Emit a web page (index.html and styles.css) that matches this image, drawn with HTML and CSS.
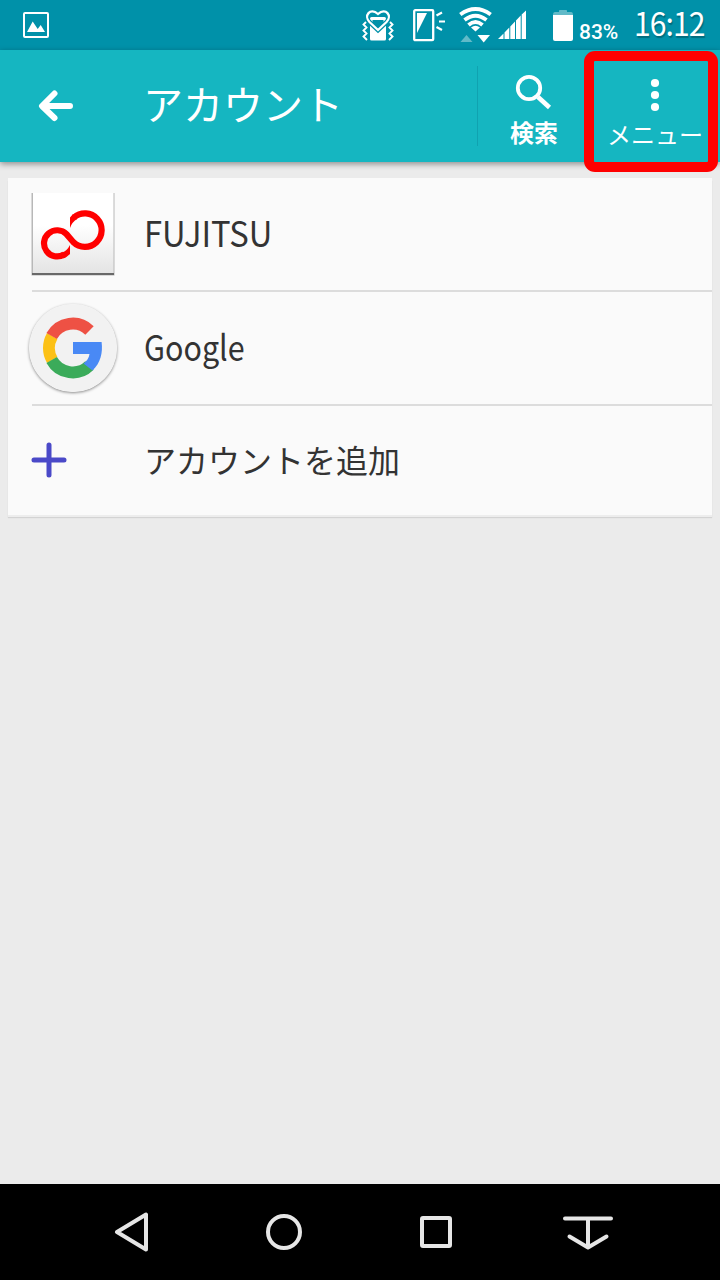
FILE: index.html
```
<!DOCTYPE html>
<html lang="ja">
<head>
    <meta charset="UTF-8">
    <meta name="viewport" content="width=device-width, initial-scale=1.0">
    <title>アカウント</title>
    <link rel="stylesheet" href="styles.css">
</head>
<body>
    <div class="screen">
        <div class="status-bar">
            <svg class="status-picture" width="28" height="28" viewBox="0 0 28 28">
                <rect x="2" y="2" width="24" height="24" rx="1" fill="none" stroke="#fff" stroke-width="2"/>
                <path d="M5 21L10.700 10.500 15.700 18 18.700 14 23 21Z" fill="#fff"/>
            </svg>
            <div class="status-icons">
                <svg class="icon-manner" width="32" height="34" viewBox="0 0 32 34" fill="none" stroke="#fff">
                    <rect x="8" y="9" width="16" height="23.500" rx="1.500" fill="#fff" stroke="none"/>
                    <path d="M10.500 12H21.500V19L16 23 10.500 19Z" fill="#0091a9" stroke="none"/>
                    <path d="M16 22L7.500 14C1.500 8 8-1 16 6C24-1 30.500 8 24.500 14Z" stroke="#0091a9" stroke-width="4.600"/>
                    <path d="M11 10H21V12H11Z" fill="#fff" stroke="none"/>
                    <path d="M16 22L7.500 14C1.500 8 8-1 16 6C24-1 30.500 8 24.500 14Z" stroke-width="2.300"/>
                    <path d="M4 14L1.500 16.500 4.500 19.500 1.500 22.500 4.500 25.500 1.500 28.500 5 32M28 14L30.500 16.500 27.500 19.500 30.500 22.500 27.500 25.500 30.500 28.500 27 32" stroke-width="1.900"/>
                </svg>
                <svg class="icon-light" width="32" height="34" viewBox="0 0 32 34" fill="none" stroke="#fff">
                    <rect x="1.200" y="2.200" width="19" height="30" rx="1" stroke-width="2.300"/>
                    <path d="M4 5H14L4 25Z" fill="#fff" stroke="none"/>
                    <path d="M23.500 7.500L29 4.500M26 13.500H32M23.500 19L29 22" stroke-width="2.200"/>
                </svg>
                <svg class="icon-wifi" width="33" height="36" viewBox="0 0 33 36" fill="none" stroke="#fff">
                    <path d="M1.300 7.500Q16.500-3.500 31.700 7.500M5.500 13Q16.500 4.500 27.500 13M9.500 18Q16.500 12 23.500 18" stroke-width="3.900"/>
                    <path d="M12 20.500Q16.500 17 21 20.500L16.500 24.500Z" fill="#fff" stroke="none"/>
                    <path d="M1.500 35L7.500 28 13.500 35Z" fill="#61bac8" stroke="none"/>
                    <path d="M18.500 28H31L24.700 35.500Z" fill="#fff" stroke="none"/>
                </svg>
                <svg class="icon-signal" width="29" height="30" viewBox="0 0 29 30" fill="#fff">
                    <path d="M0 29L5.500 23.500V29ZM6.500 22.500L11.300 17.500V29H6.500ZM12.300 16.500L17 11.500V29H12.300ZM18 10.500L22.700 5.500V29H18ZM23.700 4.500L28 0.500V29H23.700Z"/>
                </svg>
                <svg class="icon-battery" width="20" height="33" viewBox="0 0 20 33">
                    <path d="M6 1.500Q6 1 7 1H13Q14 1 14 1.500V3H18Q20 3 20 6H0Q0 3 2 3H6Z" fill="#61bac8"/>
                    <path d="M0 6H20V30Q20 32 18 32H2Q0 32 0 30Z" fill="#fff"/>
                </svg>
                <span class="battery-level">83%</span>
                <span class="clock">16:12</span>
            </div>
        </div>

        <header class="app-bar">
            <svg class="back-arrow" width="36" height="34" viewBox="0 0 36 34" fill="none" stroke="#fff" stroke-width="6" stroke-linecap="round" stroke-linejoin="round">
                <path d="M16.500 4.500L4 17 16.500 29M5 17H32"/>
            </svg>
            <h1 class="title">アカウント</h1>
            <div class="action search">
                <svg width="38" height="38" viewBox="0 0 38 38" fill="none" stroke="#fff">
                    <circle cx="14" cy="15" r="11.200" stroke-width="3.800"/>
                    <path d="M23 24L34.500 34.500" stroke-width="4.600"/>
                </svg>
                <span>検索</span>
            </div>
            <div class="action menu">
                <svg width="10" height="34" viewBox="0 0 10 34" fill="#fff">
                    <circle cx="5" cy="5" r="4.100"/>
                    <circle cx="5" cy="17" r="4.100"/>
                    <circle cx="5" cy="29" r="4.100"/>
                </svg>
                <span>メニュー</span>
                <div class="highlight"></div>
            </div>
        </header>

        <main class="content">
            <ul class="account-list">
                <li class="account">
                    <div class="account-icon">
                        <svg class="logo-fujitsu" width="84" height="84" viewBox="0 0 84 84">
                            <defs>
                                <linearGradient id="tile" x1="0" y1="0" x2="0" y2="1">
                                    <stop offset="0.400" stop-color="#fff"/>
                                    <stop offset="1" stop-color="#e4e4e4"/>
                                </linearGradient>
                            </defs>
                            <rect x="0.500" y="1" width="83" height="82.500" fill="#b8b8b8"/>
                            <rect x="2" y="1" width="80.500" height="80" fill="url(#tile)"/>
                            <rect x="1" y="81" width="82" height="2" fill="#686868"/>
                            <path d="M43 25.500A16.700 16.700 0 1 1 42.200 50L35.500 42.200A13.100 13.100 0 1 0 33 62.500" fill="none" stroke="#f00" stroke-width="6.200"/>
                            <path d="M39 25.500L42 22 46 27Q41 30 39 36ZM39 53V62Q36 65 32.500 66.500L31 60.500Q36 59 39 53Z" fill="#f00"/>
                        </svg>
                    </div>
                    <span class="account-name fujitsu">FUJITSU</span>
                </li>
                <li class="account">
                    <div class="account-icon">
                        <svg class="logo-google" width="88" height="88" viewBox="0 0 88 88">
                            <circle cx="44" cy="44" r="44" fill="#f2f2f2"/>
                            <g fill="none" stroke-width="12">
                                <path d="M23.200 56A24 24 0 0 1 23.200 32" stroke="#fcc116"/>
                                <path d="M22.700 32A24 24 0 0 1 60.500 26.500" stroke="#ee5144"/>
                                <path d="M60.500 61.500A24 24 0 0 1 22.700 56" stroke="#3bab5a"/>
                            </g>
                            <path d="M44 38H72.600C74 49 71.500 59 63.500 66.500L54.500 59.500C58 57 60 54 60.500 50H44Z" fill="#4989f5"/>
                        </svg>
                    </div>
                    <span class="account-name google">Google</span>
                </li>
                <li class="account">
                    <div class="account-icon">
                        <svg class="plus" width="36" height="36" viewBox="0 0 36 36" stroke="#4a49c8" stroke-width="5" stroke-linecap="round">
                            <path d="M3 18H33M18 3V33"/>
                        </svg>
                    </div>
                    <span class="account-name">アカウントを追加</span>
                </li>
            </ul>
        </main>

        <nav class="nav-bar">
            <svg width="52" height="40" viewBox="0 0 52 40">
                <path d="M11 20L40 2.500V37.500Z"/>
            </svg>
            <svg width="52" height="40" viewBox="0 0 52 40">
                <circle cx="26" cy="20" r="16"/>
            </svg>
            <svg width="52" height="40" viewBox="0 0 52 40">
                <rect x="12" y="6" width="28" height="28" rx="1"/>
            </svg>
            <svg width="52" height="40" viewBox="0 0 52 40">
                <path d="M3 6.500H49M26 7V35.500M7.500 24.500L26 35.500 44.500 24.500"/>
            </svg>
        </nav>
    </div>
</body>
</html>
```
FILE: styles.css
```
* {
    margin: 0;
    padding: 0;
    box-sizing: border-box;
}

:root {
    --status: #0091a9;
    --primary: #15b6c1;
    --background: #ebebeb;
    --surface: #fafafa;
    --text: #333;
    --divider: #dcdcdc;
}

body {
    font-family: 'Noto Sans CJK JP', sans-serif;
    background: var(--background);
    color: var(--text);
}

svg {
    display: block;
    flex-shrink: 0;
}

.screen {
    width: 720px;
    height: 1280px;
    display: flex;
    flex-direction: column;
    overflow: hidden;
}

.status-bar {
    height: 50px;
    padding: 0 16px 0 22px;
    background: var(--status);
    color: #fff;
    display: flex;
    justify-content: space-between;
    align-items: center;
}

.status-icons {
    height: 50px;
    display: flex;
    align-items: center;
}

.icon-manner {
    margin-right: 19px;
}

.icon-light {
    margin-right: 14px;
}

.icon-wifi {
    margin-right: 6px;
}

.icon-signal {
    margin-right: 26px;
}

.icon-battery {
    margin-right: 6px;
}

.battery-level {
    width: 55px;
    padding-top: 13px;
    font-family: Roboto, sans-serif;
    font-size: 21px;
    line-height: 26px;
    font-weight: 500;
}

.clock {
    width: 70px;
    padding-bottom: 5px;
    font-size: 32px;
    line-height: 45px;
    white-space: nowrap;
    letter-spacing: -1px;
    text-shadow: 1px 2px 1px rgba(0, 0, 0, 0.25);
    transform: scaleX(0.94);
    transform-origin: left;
}

.app-bar {
    position: relative;
    z-index: 1;
    height: 112px;
    padding-left: 38px;
    background: var(--primary);
    color: #fff;
    display: flex;
    align-items: center;
    box-shadow: 0 2px 6px rgba(0, 0, 0, 0.4);
}

.title {
    flex: 1;
    margin-left: 69px;
    padding-bottom: 5px;
    font-size: 40px;
    font-weight: 400;
    line-height: 107px;
}

.action {
    display: flex;
    flex-direction: column;
    align-items: center;
    font-size: 24px;
    line-height: 32px;
}

.search {
    width: 107px;
    height: 80px;
    padding: 7px 0 0 6px;
    border-left: 1px solid #10a2b0;
    font-weight: 700;
}

.search span {
    margin-top: 5px;
}

.menu {
    position: relative;
    width: 136px;
    height: 112px;
    padding: 28px 0 0 6px;
    font-weight: 400;
}

.menu span {
    margin-top: 6px;
}

.highlight {
    position: absolute;
    top: 1px;
    left: 0;
    width: 134px;
    height: 121px;
    border: 10px solid #f00;
    border-radius: 11px;
}

.content {
    flex: 1;
    padding: 16px 8px;
}

.account-list {
    background: var(--surface);
    list-style: none;
    box-shadow: 0 2px 0 #ededed, 0 3px 1px rgba(0, 0, 0, 0.1);
}

.account {
    height: 114px;
    margin-left: 24px;
    border-bottom: 2px solid var(--divider);
    display: flex;
    align-items: center;
}

.account:last-child {
    height: 109px;
    border-bottom: none;
}

.account-icon {
    width: 112px;
    display: flex;
}

.logo-fujitsu {
    margin-left: -1px;
}

.logo-google {
    margin-left: -3px;
    border-radius: 50%;
    box-shadow: 0 1px 3px rgba(0, 0, 0, 0.45);
}

.plus {
    margin: 0 0 1px -1px;
}

.account-name {
    padding-bottom: 4px;
    font-size: 32px;
    line-height: 48px;
}

/* latin names are set slightly condensed */
.fujitsu,
.google {
    font-size: 35px;
    transform-origin: left;
}

.fujitsu {
    transform: scaleX(0.935);
}

.google {
    transform: scaleX(0.87);
}

.nav-bar {
    height: 96px;
    padding: 0 56px;
    background: #000;
    display: grid;
    grid-template-columns: repeat(4, 152px);
    align-items: center;
    justify-items: center;
}

.nav-bar svg {
    fill: none;
    stroke: #e6e6e6;
    stroke-width: 4;
    stroke-linecap: round;
    stroke-linejoin: round;
}
```
